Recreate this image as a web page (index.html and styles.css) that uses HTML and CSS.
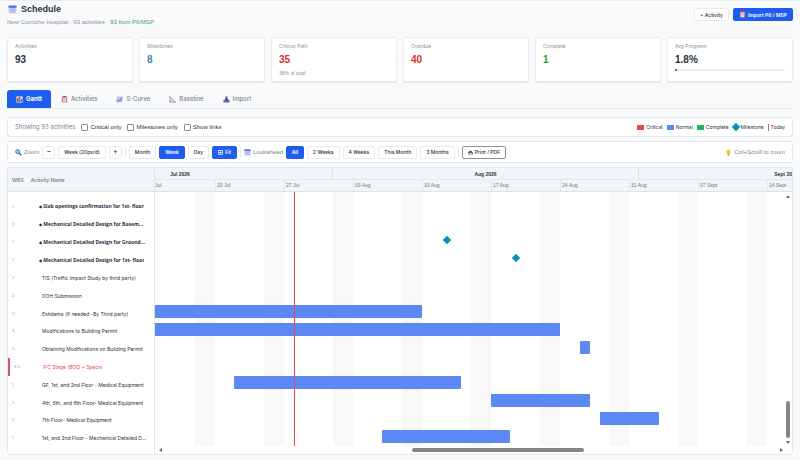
FILE: index.html
```html
<!DOCTYPE html>
<html lang="en">
<head>
<meta charset="utf-8">
<title>Schedule</title>
<link rel="stylesheet" href="styles.css">
</head>
<body>

<svg class="defs" aria-hidden="true">
  <symbol id="i-cal" viewBox="0 0 16 16">
    <rect x="1" y="1" width="14" height="14" rx="1" fill="#c9cdf3"/>
    <rect x="1" y="1" width="14" height="4" fill="#4f6fd8"/>
    <path d="M3 8h10M3 11h10M6 6v8M10 6v8" stroke="#a5a5e2" stroke-width="1"/>
  </symbol>
  <symbol id="i-chart" viewBox="0 0 16 16">
    <rect x="1" y="1" width="14" height="14" fill="#e8ecf2"/>
    <rect x="2" y="5" width="4" height="9" fill="#2f9e58"/>
    <rect x="6" y="2" width="4" height="12" fill="#d9483b"/>
    <rect x="11" y="7" width="3" height="7" fill="#3b76d6"/>
  </symbol>
  <symbol id="i-clip" viewBox="0 0 16 16">
    <rect x="2" y="1" width="12" height="14" fill="#c96a6a"/>
    <rect x="4" y="3" width="8" height="11" fill="#f1e6ee"/>
    <rect x="5" y="0" width="6" height="3" fill="#9a4c55"/>
    <path d="M5 6h6M5 8.500h6M5 11h6" stroke="#8d8fb0"/>
  </symbol>
  <symbol id="i-curve" viewBox="0 0 16 16">
    <rect x="1" y="1" width="14" height="14" fill="#d3d7f4"/>
    <path d="M1 5h14M1 10h14M6 1v14M11 1v14" stroke="#9aa3e0"/>
    <path d="M2 13l4-4 3 2 5-8" stroke="#5157c9" stroke-width="2" fill="none"/>
  </symbol>
  <symbol id="i-angle" viewBox="0 0 16 16">
    <path d="M2 1v13h13z" fill="none" stroke="#7d8490" stroke-width="2"/>
    <path d="M5 8v3h3z" fill="#7d8490"/>
  </symbol>
  <symbol id="i-in" viewBox="0 0 16 16">
    <path d="M1 9h14v6h-14z" fill="#5470c8"/>
    <path d="M6 1h4v5h3l-5 6-5-6h3z" fill="#3b3f9b"/>
    <path d="M7 1h2v5h-2z" fill="#d6483f"/>
  </symbol>
  <symbol id="i-find" viewBox="0 0 16 16">
    <circle cx="6" cy="6" r="4.500" fill="#9fd0ee" stroke="#2d6f9e" stroke-width="2"/>
    <path d="M9.500 9.500l5 5" stroke="#334a63" stroke-width="3"/>
  </symbol>
  <symbol id="i-fit" viewBox="0 0 16 16">
    <rect x="1" y="2" width="14" height="12" fill="none" stroke="#fff" stroke-width="2"/>
    <path d="M8 2v12M1 8h14" stroke="#fff" stroke-width="2"/>
  </symbol>
  <symbol id="i-print" viewBox="0 0 16 16">
    <path d="M4 2h8v4h3v8h-14v-8h3z" fill="#3c4350"/>
    <rect x="4" y="9" width="8" height="5" fill="#eef0f3"/>
  </symbol>
  <symbol id="i-bulb" viewBox="0 0 16 16">
    <circle cx="8" cy="6" r="5" fill="#fbc531"/>
    <path d="M6 10h4v5h-4z" fill="#a8946a"/>
  </symbol>
</svg>

<div class="header">
  <div>
    <h1><svg class="icon big"><use href="#i-cal"/></svg>Schedule</h1>
    <p class="sub">New Corniche Hospital &middot; 93 activities &middot; <span class="src">93 from P6/MSP</span></p>
  </div>
  <div class="header-right">
    <button type="button" class="btn">+ Activity</button>
    <button type="button" class="btn active"><svg class="icon"><use href="#i-clip"/></svg>Import P6 / MSP</button>
  </div>
</div>

<div class="cards">
  <div class="card"><div class="label">Activities</div><div class="value">93</div></div>
  <div class="card"><div class="label">Milestones</div><div class="value blue">8</div></div>
  <div class="card"><div class="label">Critical Path</div><div class="value red">35</div><div class="note">38% of total</div></div>
  <div class="card"><div class="label">Overdue</div><div class="value red">40</div></div>
  <div class="card"><div class="label">Complete</div><div class="value green">1</div></div>
  <div class="card"><div class="label">Avg Progress</div><div class="value">1.8%</div><div class="progress"><div class="fill" style="width:1.8%"></div></div></div>
</div>

<div class="tabs">
  <button type="button" class="tab active"><svg class="icon"><use href="#i-chart"/></svg>Gantt</button>
  <button type="button" class="tab"><svg class="icon"><use href="#i-clip"/></svg>Activities</button>
  <button type="button" class="tab"><svg class="icon"><use href="#i-curve"/></svg>S-Curve</button>
  <button type="button" class="tab"><svg class="icon"><use href="#i-angle"/></svg>Baseline</button>
  <button type="button" class="tab"><svg class="icon"><use href="#i-in"/></svg>Import</button>
</div>

<div class="panel filters">
  <span class="showing">Showing 93 activities</span>
  <label><input type="checkbox">Critical only</label>
  <label><input type="checkbox">Milestones only</label>
  <label><input type="checkbox">Show links</label>
  <div class="legend">
    <span><i class="swatch crit"></i>Critical</span>
    <span><i class="swatch norm"></i>Normal</span>
    <span><i class="swatch comp"></i>Complete</span>
    <span><i class="diamond"></i>Milestone</span>
    <span><i class="line"></i>Today</span>
  </div>
</div>

<div class="panel toolbar">
  <span class="caption"><svg class="icon"><use href="#i-find"/></svg>Zoom</span>
  <button type="button" class="btn step">&minus;</button>
  <button type="button" class="btn">Week (20px/d)</button>
  <button type="button" class="btn step">+</button>
  <span class="sep"></span>
  <button type="button" class="btn">Month</button>
  <button type="button" class="btn active">Week</button>
  <button type="button" class="btn">Day</button>
  <button type="button" class="btn active"><svg class="icon small"><use href="#i-fit"/></svg>Fit</button>
  <span class="sep"></span>
  <span class="caption"><svg class="icon"><use href="#i-cal"/></svg>Lookahead</span>
  <button type="button" class="btn active">All</button>
  <button type="button" class="btn">2 Weeks</button>
  <button type="button" class="btn">4 Weeks</button>
  <button type="button" class="btn">This Month</button>
  <button type="button" class="btn">3 Months</button>
  <span class="sep"></span>
  <button type="button" class="btn print"><svg class="icon small"><use href="#i-print"/></svg>Print / PDF</button>
  <span class="hint"><svg class="icon"><use href="#i-bulb"/></svg>Ctrl+Scroll to zoom</span>
</div>

<div class="gantt">
  <div class="names">
    <div class="names-head"><span>WBS</span><span>Activity Name</span></div>
    <div class="rows">
      <div class="row ms"><span class="wbs">2</span><span class="name"><small>&#9670;</small> Slab openings confirmation for 1st- floor</span></div>
      <div class="row ms"><span class="wbs">2</span><span class="name"><small>&#9670;</small> Mechanical Detailed Design for Basem...</span></div>
      <div class="row ms"><span class="wbs">2</span><span class="name"><small>&#9670;</small> Mechanical Detailed Design for Ground...</span></div>
      <div class="row ms"><span class="wbs">2</span><span class="name"><small>&#9670;</small> Mechanical Detailed Design for 1st- floor</span></div>
      <div class="row"><span class="wbs">2</span><span class="name">TIS (Traffic Impact Study by third party)</span></div>
      <div class="row"><span class="wbs">2</span><span class="name">DOH Submission</span></div>
      <div class="row"><span class="wbs">3</span><span class="name">Estidama (If needed -By Third party)</span></div>
      <div class="row"><span class="wbs">4</span><span class="name">Modifications to Building Permit</span></div>
      <div class="row"><span class="wbs">5</span><span class="name">Obtaining Modifications on Building Permit</span></div>
      <div class="row critical"><span class="wbs">IFC</span><span class="name">IFC Stage (BOQ + Specs)</span></div>
      <div class="row"><span class="wbs">1</span><span class="name">GF, 1st, and 2nd Floor - Medical Equipment</span></div>
      <div class="row"><span class="wbs">2</span><span class="name">4th, 5th, and 6th Floor- Medical Equipment</span></div>
      <div class="row"><span class="wbs">3</span><span class="name">7th Floor- Medical Equipment</span></div>
      <div class="row"><span class="wbs">1</span><span class="name">1st, and 2nd Floor - Mechanical Detailed D...</span></div>
    </div>
  </div>
  <div class="chart">
    <div class="months">
      <span style="width:178px"><b class="jul">Jul 2026</b></span>
      <span style="width:306px"><b>Aug 2026</b></span>
      <span class="last">Sept 20</span>
    </div>
    <div class="weeks">
      <span class="cut">Jul</span><span>20 Jul</span><span>27 Jul</span><span>03 Aug</span><span>10 Aug</span><span>17 Aug</span><span>24 Aug</span><span>31 Aug</span><span>07 Sept</span><span>14 Sept</span>
    </div>
    <div class="plot">
      <div class="rows">
        <div class="row"></div>
        <div class="row"></div>
        <div class="row"><i class="diamond" style="left:289px"></i></div>
        <div class="row"><i class="diamond" style="left:358px"></i></div>
        <div class="row"></div>
        <div class="row"></div>
        <div class="row"><div class="bar" style="left:-4px;width:271px"></div></div>
        <div class="row"><div class="bar" style="left:-4px;width:409px"></div></div>
        <div class="row"><div class="bar" style="left:425px;width:10px"></div></div>
        <div class="row"></div>
        <div class="row"><div class="bar" style="left:79px;width:227px"></div></div>
        <div class="row"><div class="bar" style="left:336px;width:99px"></div></div>
        <div class="row"><div class="bar" style="left:445px;width:59px"></div></div>
        <div class="row"><div class="bar" style="left:227px;width:128px"></div></div>
      </div>
      <div class="today" style="left:139px"></div>
      <div class="vscroll"><i class="up"></i><i class="thumb"></i><i class="down"></i></div>
    </div>
    <div class="hscroll"><i class="prev"></i><i class="thumb"></i><i class="next"></i></div>
  </div>
</div>

</body>
</html>
```

FILE: styles.css
```css
* {
  box-sizing: border-box;
}
body {
  margin: 0;
  padding: 3px 7px 5px;
  border-top: 1px solid #e9ecf0;
  background: #f9fafc;
  color: #2a313c;
  font-family: Inter, "Liberation Sans", sans-serif;
  font-size: 5px;
  line-height: 8px;
}
button {
  font: inherit;
  color: inherit;
  margin: 0;
}
.defs {
  display: none;
}
.icon {
  width: 7px;
  height: 7px;
  margin-right: 2px;
  flex: none;
}
.icon.big {
  width: 9px;
  height: 9px;
  margin-right: 4px;
}
.icon.small {
  width: 5px;
  height: 5px;
}

/* header */
.header {
  display: flex;
  justify-content: space-between;
  align-items: flex-start;
}
h1 {
  display: flex;
  align-items: center;
  margin: 0;
  padding-left: 1px;
  font: bold 9px/11px "Liberation Sans", Arial, sans-serif;
}
.sub {
  margin: 3px 0 0;
  font: 6px/8px "Liberation Sans", Arial, sans-serif;
  color: #8b93a0;
}
.src {
  color: #3fa060;
}
.header-right {
  display: flex;
  gap: 4px;
  padding-top: 4px;
}

.btn {
  display: flex;
  align-items: center;
  justify-content: center;
  height: 13px;
  padding: 0 5px;
  background: #fff;
  border: 1px solid #e8ebf0;
  border-radius: 2px;
  font-weight: 500;
  white-space: nowrap;
}
.btn.active {
  background: #1f5cf0;
  border-color: #1f5cf0;
  color: #fff;
  font-weight: 600;
}

/* cards */
.cards {
  display: grid;
  grid-template-columns: repeat(6, 1fr);
  gap: 6px;
  margin-top: 11px;
}
.card {
  height: 45px;
  padding: 4px 7px;
  background: #fff;
  border: 1px solid #e9ecf1;
  border-radius: 3px;
  box-shadow: 0 1px 1px #e3e6eb;
}
.label {
  color: #8b93a0;
}
.value {
  margin-top: 4px;
  font: bold 10px/12px "Liberation Sans", Arial, sans-serif;
}
.value.blue { color: #3f86b3; }
.value.red { color: #d32f2f; }
.value.green { color: #2a9d3a; }
.note {
  margin-top: 3px;
  font: 5px/8px "Liberation Sans", Arial, sans-serif;
  color: #8b93a0;
}
.progress {
  height: 2px;
  margin-top: 3px;
  background: #eceef2;
  border-radius: 1px;
}
.fill {
  height: 2px;
  background: #3a1fd0;
  border-radius: 1px;
}

/* tabs */
.tabs {
  display: flex;
  gap: 1px;
  margin-top: 8px;
  border-bottom: 1px solid #e4e7ec;
}
.tab {
  display: flex;
  align-items: center;
  height: 18px;
  padding: 0 9px;
  border: 0;
  background: none;
  color: #7b8390;
  font-size: 6px;
  font-weight: 500;
}
.tab .icon {
  margin-right: 3px;
}
.tab.active {
  background: #1f5cf0;
  border-radius: 3px 3px 0 0;
  color: #fff;
  font-weight: 700;
}

/* filter and toolbar panels */
.panel {
  display: flex;
  align-items: center;
  padding: 0 7px;
  background: #fff;
  border: 1px solid #e6e9ee;
  border-radius: 3px;
}
.filters {
  height: 20px;
  margin-top: 8px;
  gap: 6px;
}
.showing {
  font-size: 6px;
  color: #7b8390;
}
.filters label {
  display: flex;
  align-items: center;
  gap: 2px;
  font: 6px/8px "Liberation Sans", Arial, sans-serif;
}
.filters input {
  appearance: none;
  width: 7px;
  height: 7px;
  margin: 0;
  border: 1px solid #8a8f98;
  border-radius: 1px;
  background: #fff;
}
.legend {
  display: flex;
  gap: 4px;
  margin-left: auto;
}
.legend span {
  display: flex;
  align-items: center;
  gap: 2px;
}
.swatch {
  width: 7px;
  height: 5px;
}
.crit { background: #ef4444; }
.norm { background: #5b88f2; }
.comp { background: #22b35e; }
.line {
  width: 1px;
  height: 7px;
  background: #d9646a;
}
.diamond {
  width: 6px;
  height: 6px;
  background: #0891b2;
  transform: rotate(45deg);
}
.toolbar {
  height: 22px;
  margin-top: 4px;
  gap: 3px;
}
.caption,
.hint {
  display: flex;
  align-items: center;
  font: 6px/8px "Liberation Sans", Arial, sans-serif;
  color: #7b8390;
}
.hint {
  margin-left: auto;
}
.btn.step {
  width: 13px;
  padding: 0;
  font-size: 7px;
}
.sep {
  width: 1px;
  height: 9px;
  background: #e6e9ee;
}
.btn.print {
  border-color: #8a8f98;
}

/* gantt */
.gantt {
  display: flex;
  margin-top: 4px;
  background: #fff;
  border: 1px solid #e4e7ec;
  border-radius: 3px;
  overflow: hidden;
}
.names {
  flex: none;
  width: 147px;
  border-right: 1px solid #dfe3e8;
}
.names-head {
  display: flex;
  align-items: center;
  gap: 7px;
  height: 24px;
  padding-left: 4px;
  background: #f2f5f8;
  border-bottom: 1px solid #dfe3e8;
  color: #7b8390;
  font-weight: 600;
}
.rows {
  display: grid;
  grid-template-rows: repeat(14, 1fr);
  grid-template-columns: minmax(0, 1fr);
  height: 249px;
  margin-top: 6px;
}
.row {
  display: flex;
  align-items: center;
  position: relative;
}
.wbs {
  flex: none;
  width: 34px;
  padding-left: 4px;
  font-size: 4px;
  color: #9aa1ac;
}
.name {
  overflow: hidden;
  white-space: nowrap;
  text-overflow: ellipsis;
}
.ms .wbs {
  width: 31px;
}
.ms .name {
  font-family: "Open Sans", "Liberation Sans", sans-serif;
  font-weight: 700;
}
.critical {
  border-left: 2px solid #d9545c;
  color: #e5484d;
}
.critical .wbs {
  width: 33px;
}
.chart {
  flex: 1;
  min-width: 0;
  overflow: hidden;
}
.months,
.weeks {
  display: flex;
  background: #f2f5f8;
  overflow: hidden;
  white-space: nowrap;
}
.months span {
  flex: none;
  height: 12px;
  border-right: 1px solid #dfe3e8;
  border-bottom: 1px solid #e4e7ec;
  text-align: center;
  font: bold 5px/12px "Liberation Sans", Arial, sans-serif;
}
.jul {
  display: block;
  padding-right: 127px;
}
.months .last {
  flex: 1;
  border-right: 0;
  text-align: right;
}
.weeks {
  border-bottom: 1px solid #dfe3e8;
}
.weeks span {
  flex: none;
  width: 69px;
  height: 11px;
  padding-left: 1px;
  border-left: 1px solid #e4e7ec;
  font: 5px/11px "Liberation Sans", Arial, sans-serif;
  color: #6d7582;
}
.weeks .cut {
  width: 60px;
  border: 0;
  padding: 0;
}
.weeks span:last-child {
  flex: 1;
}
.plot {
  position: relative;
  background: repeating-linear-gradient(90deg, #fff 0 40px, #f8f8f9 40px 60px, #fff 60px 69px);
  overflow: hidden;
}
.plot .rows {
  margin: 0;
  padding: 4px 0 1px;
  height: 254px;
}
.bar {
  position: absolute;
  height: 13px;
  background: #5b88f2;
  border-radius: 1px;
}
.plot .diamond {
  position: absolute;
}
.today {
  position: absolute;
  top: 0;
  bottom: 0;
  width: 1px;
  background: #e5484d;
}
.vscroll {
  position: absolute;
  top: 0;
  right: 0;
  bottom: 0;
  display: flex;
  flex-direction: column;
  align-items: center;
  width: 8px;
  padding: 3px 0 2px;
  background: #fff;
}
.vscroll i {
  border: 2px solid transparent;
}
.vscroll .up {
  border-top: 0;
  border-bottom: 3px solid #6b6b6b;
}
.vscroll .down {
  border-bottom: 0;
  border-top: 3px solid #6b6b6b;
}
.vscroll .thumb {
  width: 4px;
  height: 37px;
  margin: auto 0 3px;
  border: 0;
  border-radius: 2px;
  background: #858585;
}
.hscroll {
  display: flex;
  align-items: center;
  height: 8px;
  padding: 0 9px 0 4px;
}
.hscroll i {
  border: 2px solid transparent;
}
.hscroll .prev {
  border-left: 0;
  border-right: 3px solid #6b6b6b;
}
.hscroll .next {
  border-right: 0;
  border-left: 3px solid #6b6b6b;
}
.hscroll .thumb {
  width: 172px;
  height: 4px;
  margin: 0 auto 0 40%;
  border: 0;
  border-radius: 2px;
  background: #858585;
}
```
